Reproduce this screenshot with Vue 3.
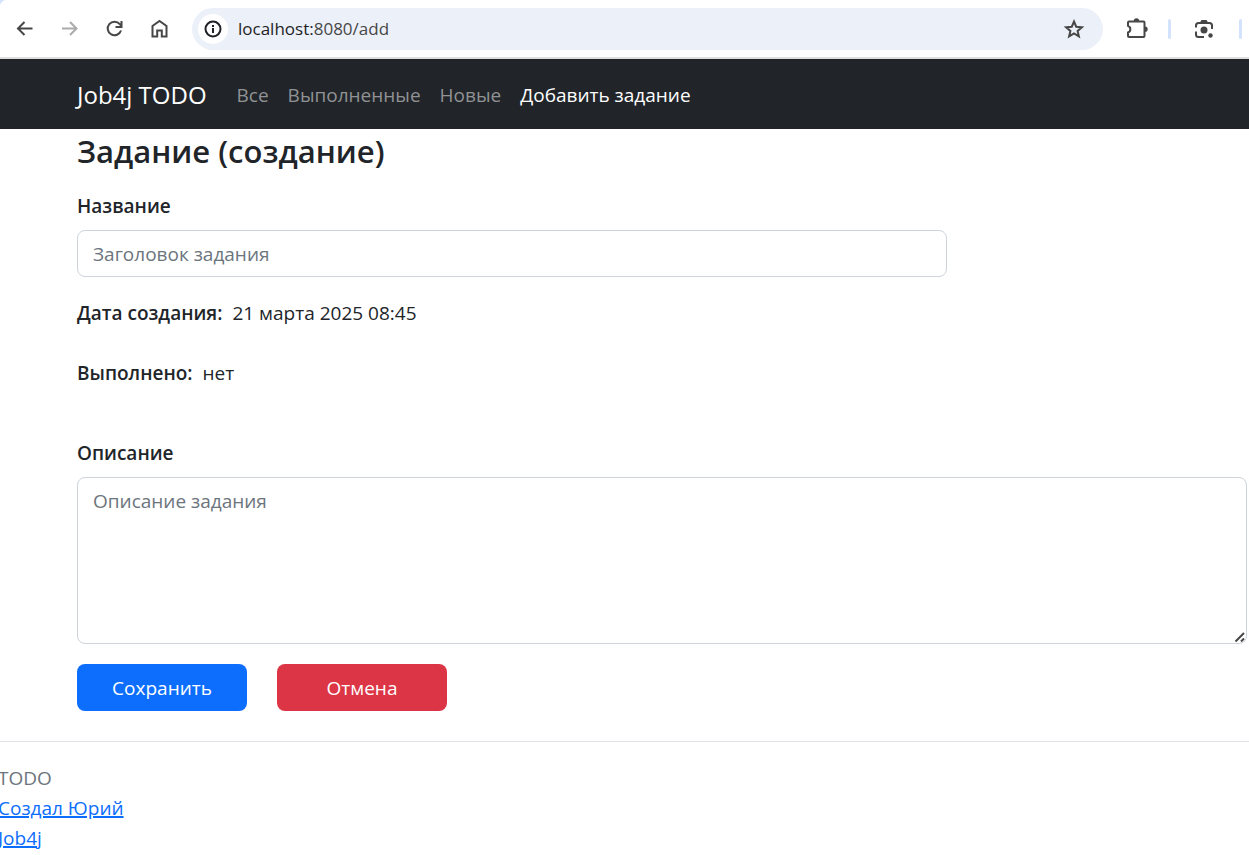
<script setup>
import { ref } from 'vue'

const title = ref('')
const description = ref('')
const links = [
  { text: 'Все', href: '#all' },
  { text: 'Выполненные', href: '#done' },
  { text: 'Новые', href: '#new' },
  { text: 'Добавить задание', href: '#add', active: true },
]
</script>

<template>
  <div class="page">
    <div class="browser">
      <button class="tool" type="button" aria-label="Назад">
        <svg width="24" height="24" viewBox="0 0 24 24"><path d="M19.500 11.500H5.500M11.500 5l-6.500 6.500 6.500 6.500" /></svg>
      </button>
      <button class="tool faded" type="button" aria-label="Вперёд">
        <svg width="24" height="24" viewBox="0 0 24 24"><path d="M4 11.500h14M12 5l6.500 6.500L12 18" /></svg>
      </button>
      <button class="tool" type="button" aria-label="Обновить">
        <svg width="24" height="24" viewBox="0 0 24 24"><path d="M18 13.500a6.800 6.800 0 1 1-1.200-6.300l1.700 2M18.500 4v6h-6" /></svg>
      </button>
      <button class="tool" type="button" aria-label="Главная">
        <svg width="24" height="24" viewBox="0 0 24 24"><path d="M4.500 19.500V9L11.500 4l7 5v10.500h-4.700v-6H9.200v6z" /></svg>
      </button>
      <div class="address">
        <button class="info" type="button" aria-label="Сведения о сайте">
          <svg width="20" height="20" viewBox="0 0 20 20">
            <circle cx="10" cy="10" r="7.500" />
            <path d="M10 9v5M10 6v2" />
          </svg>
        </button>
        <span class="url"><span class="host">localhost:</span>8080/add</span>
        <button class="star" type="button" aria-label="Добавить в закладки">
          <svg width="24" height="24" viewBox="0 0 24 24"><path d="M12 4.500l2.200 5.200 5.700.5-4.300 3.700 1.300 5.500-4.900-2.900-4.900 2.900 1.300-5.500-4.300-3.700 5.700-.5z" /></svg>
        </button>
      </div>
      <button class="tool ext" type="button" aria-label="Расширения">
        <svg width="26" height="26" viewBox="0 0 26 26">
          <path d="M5 5.500h14.500q1 0 1 1V20q0 1-1 1H5q-1 0-1-1v-3.500a3.500 3.500 0 0 0 0-6.600V6.500q0-1 1-1z" />
          <path class="solid" d="M9.800 5a2.700 2.700 0 0 1 5.400 0zM21 10.500a2.700 2.700 0 0 1 0 5.400z" />
        </svg>
      </button>
      <span class="divider"></span>
      <button class="tool lens" type="button" aria-label="Поиск по картинке">
        <svg width="24" height="24" viewBox="0 0 24 24">
          <path d="M4 10.500V8.500Q4 6 6.500 6h11Q20 6 20 8.500v3.500M4 14.500v3Q4 20 6.500 20H12" />
          <path class="solid" d="M8 5.500l1.500-2.500h5L16 5.500z" />
          <circle class="solid" cx="12" cy="13" r="3.500" />
          <circle class="solid" cx="18.500" cy="18.500" r="2.200" />
        </svg>
      </button>
      <span class="divider"></span>
    </div>

    <nav class="navbar">
      <a class="brand" href="#home">Job4j TODO</a>
      <a v-for="link in links" :key="link.text" class="nav-link" :class="{ active: link.active }" :href="link.href">{{ link.text }}</a>
    </nav>

    <main>
      <h3>Задание (создание)</h3>
      <form @submit.prevent>
        <label for="title">Название</label>
        <input id="title" v-model="title" type="text" placeholder="Заголовок задания" />
        <p class="fact date"><b>Дата создания:</b><span>21 марта 2025 08:45</span></p>
        <p class="fact state"><b>Выполнено:</b><span>нет</span></p>
        <label for="description">Описание</label>
        <div class="area">
          <textarea id="description" v-model="description" placeholder="Описание задания"></textarea>
          <svg class="grip" width="12" height="12" viewBox="0 0 12 12"><path d="M1.500 10.500L10 2M7 10.500l3-3" /></svg>
        </div>
        <div class="actions">
          <button class="btn save" type="submit">Сохранить</button>
          <button class="btn cancel" type="button">Отмена</button>
        </div>
      </form>
    </main>

    <footer>
      <span>TODO</span>
      <a href="#author">Создал Юрий</a>
      <a href="#job4j">Job4j</a>
    </footer>
  </div>
</template>

<style>
body {
  margin: 0;
  background: #fff;
  overflow: hidden;
}
</style>

<style scoped>
.page,
.page * {
  box-sizing: border-box;
}
.page {
  font-family: "Open Sans", "Noto Sans", sans-serif;
  font-size: 19px;
  line-height: 30px;
  color: #212529;
}
button,
input,
textarea {
  font: inherit;
}
svg {
  display: block;
  fill: none;
  stroke: #474747;
  stroke-width: 2;
}
.browser {
  display: flex;
  align-items: center;
  height: 59px;
  padding: 0 7px 0 13px;
  border-bottom: 2px solid #dedede;
  background: radial-gradient(circle at 8px 8px, #fff 8px, #d3e3fd 9px) 0 0 / 8px 8px no-repeat;
}
.tool,
.info,
.star {
  display: flex;
  flex: none;
  align-items: center;
  justify-content: center;
  padding: 0;
  border: 0;
  background: none;
}
.tool {
  margin-right: 21px;
}
.faded svg {
  stroke: #ababab;
}
.address {
  display: flex;
  flex: 1;
  align-items: center;
  height: 42px;
  margin-left: -1px;
  padding: 0 17px 0 6px;
  border-radius: 21px;
  background: #ecf0f9;
}
.info {
  width: 30px;
  height: 30px;
  border-radius: 50%;
  background: #fff;
}
.info svg {
  stroke: #202124;
}
.info path {
  stroke-dasharray: 5 9;
}
.url {
  flex: 1;
  margin-left: 10px;
  font-size: 17px;
  color: #474747;
}
.host {
  color: #1f1f1f;
}
.ext {
  margin: 0 18px 0 21px;
}
.solid {
  fill: #474747;
  stroke: none;
}
.divider {
  flex: none;
  width: 3px;
  height: 20px;
  border-radius: 2px;
  background: #d3e3fd;
}
.lens {
  margin: 0 23px 0 21px;
}
.navbar {
  display: flex;
  align-items: center;
  height: 70px;
  padding: 2px 77px 0;
  background: #212529;
}
.brand {
  margin-right: 30px;
  font-size: 24px;
  color: #fff;
  text-decoration: none;
}
.nav-link {
  margin-right: 19px;
  color: #909294;
  text-decoration: none;
}
.nav-link.active {
  color: #fff;
}
main {
  padding: 1px 2px 0 77px;
}
h3 {
  margin: 0 0 19px;
  font-size: 31px;
  font-weight: 600;
  line-height: 42px;
}
label {
  display: block;
  margin-bottom: 9px;
}
label,
b {
  font-weight: 600;
}
input,
textarea {
  display: block;
  padding: 8px 15px;
  border: 1px solid #ced4da;
  border-radius: 8px;
  background: #fff;
  color: #212529;
}
input::placeholder,
textarea::placeholder {
  color: #6c757d;
  opacity: 1;
}
input {
  width: 75%;
  max-width: 870px;
  height: 47px;
}
.area {
  position: relative;
}
textarea {
  width: 100%;
  height: 167px;
  resize: none;
}
.grip {
  position: absolute;
  right: 1px;
  bottom: 1px;
  pointer-events: none;
}
.fact {
  display: flex;
  gap: 10px;
  margin: 0;
}
.date {
  margin: 21px 0 30px;
}
.state {
  margin-bottom: 50px;
}
.actions {
  display: flex;
  gap: 30px;
  margin: 20px 0 30px;
}
.btn {
  width: 170px;
  height: 47px;
  padding: 0;
  border: 0;
  border-radius: 8px;
  color: #fff;
}
.save {
  background: #0d6efd;
}
.cancel {
  background: #dc3545;
}
footer {
  display: flex;
  flex-direction: column;
  align-items: flex-start;
  margin-left: -2px;
  padding-top: 21px;
  border-top: 1px solid #dee2e6;
  color: #6c757d;
}
footer a {
  color: #0d6efd;
  text-decoration-thickness: 2px;
}
</style>
